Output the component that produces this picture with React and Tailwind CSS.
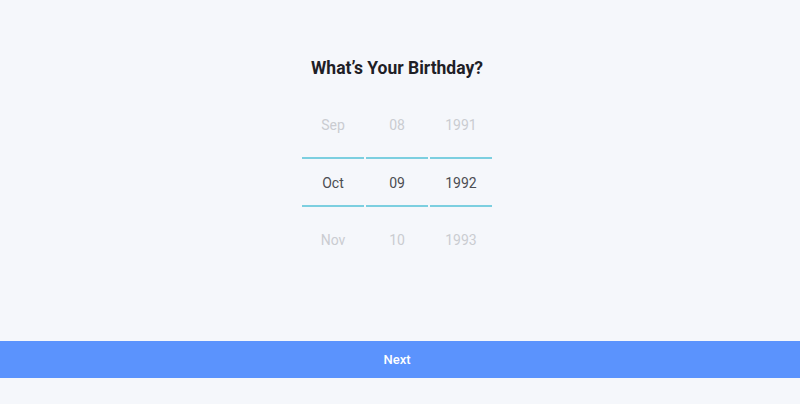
import React from 'react';

const columns = [
  { items: ['Sep', 'Oct', 'Nov'] },
  { items: ['08', '09', '10'] },
  { items: ['1991', '1992', '1993'] },
];

const PickerColumn = ({ items }) => (
  <div className="flex w-[62px] flex-col items-stretch">
    <div className="flex h-[57px] items-center justify-center pb-[7px] text-[14px] text-[#caccd1]">
      {items[0]}
    </div>
    <div className="h-[2px] bg-[#7ccfe0]" />
    <div className="flex h-[46px] items-center justify-center pt-[2px] text-[14px] text-[#4b4d52]">
      {items[1]}
    </div>
    <div className="h-[2px] bg-[#7ccfe0]" />
    <div className="flex h-[66px] items-center justify-center text-[14px] text-[#caccd1]">
      {items[2]}
    </div>
  </div>
);

export default function App() {
  return (
    <div className="flex h-[404px] w-[800px] flex-col bg-[#f5f7fb] font-['Roboto',sans-serif]">
      <div className="flex flex-1 flex-col items-center pr-[6px] pt-[57px]">
        <h1 className="text-[17.5px] font-bold leading-[22px] text-[#1e2026]">
          What’s Your Birthday?
        </h1>
        <div className="mt-[21px] flex gap-[2px]">
          {columns.map((c, i) => (
            <PickerColumn key={i} items={c.items} />
          ))}
        </div>
      </div>
      <button className="flex h-[37px] w-full items-center justify-center bg-[#5b93fd] pr-[6px] text-[13px] font-medium text-white">
        Next
      </button>
      <div className="h-[26px]" />
    </div>
  );
}
